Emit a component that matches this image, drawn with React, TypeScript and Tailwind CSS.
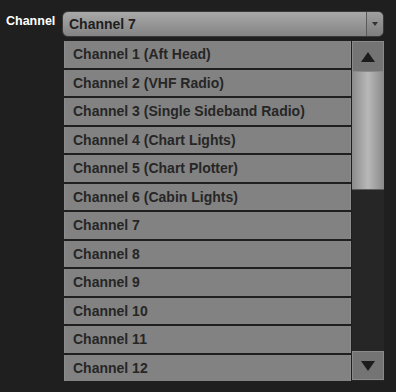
import { useState } from "react";

const channels = [
    "Channel 1 (Aft Head)",
    "Channel 2 (VHF Radio)",
    "Channel 3 (Single Sideband Radio)",
    "Channel 4 (Chart Lights)",
    "Channel 5 (Chart Plotter)",
    "Channel 6 (Cabin Lights)",
    "Channel 7",
    "Channel 8",
    "Channel 9",
    "Channel 10",
    "Channel 11",
    "Channel 12",
];

export default function App() {
    const [selected, setSelected] = useState<string>("Channel 7");

    return (
        <div className="w-[396px] h-[392px] bg-[#1f1f1f] flex pt-[11px] pl-[6px] font-['Liberation_Sans',Arial,sans-serif]">
            <label className="w-[56px] shrink-0 text-white font-bold text-[12.5px] leading-none pt-[4px]">Channel</label>
            <div className="flex flex-col w-[322px] gap-[4px]">
                {/* --- SELECT --- */}
                <div className="h-[26px] flex rounded-[6px] border border-[#3a3a3a] bg-gradient-to-b from-[#a8a8a8] to-[#848484] overflow-hidden">
                    <div className="flex-1 flex items-center pl-[6px] text-[#1e1e1e] font-bold text-[14px]">{selected}</div>
                    <div className="w-[17px] flex items-center justify-center border-l border-[#5a5a5a] bg-gradient-to-b from-[#a0a0a0] to-[#7e7e7e]">
                        <svg width="6" height="4" viewBox="0 0 6 4"><path d="M0 0H6L3 4Z" fill="#333" /></svg>
                    </div>
                </div>
                {/* --- LIST --- */}
                <div className="flex gap-[1px]">
                    <div className="flex flex-col gap-[2px] w-[287px] ml-[2px]">
                        {channels.map((c) => (
                            <button
                                key={c}
                                onClick={() => setSelected(c)}
                                className="h-[26.5px] bg-[#828282] border-x border-[#8c8c8c] text-left pl-[8px] text-[#262626] font-bold text-[14px] leading-none"
                            >
                                {c}
                            </button>
                        ))}
                    </div>
                    <div className="w-[32px] flex flex-col bg-[#262626]">
                        <div className="h-[31px] bg-[#747474] border border-[#8a8a8a] flex items-center justify-center">
                            <svg width="14" height="10" viewBox="0 0 14 10"><path d="M0 10H14L7 0Z" fill="#1c1c1c" /></svg>
                        </div>
                        <div className="h-[118px] bg-gradient-to-r from-[#8c8c8c] via-[#b8b8b8] to-[#8a8a8a] border-b border-[#5a5a5a]" />
                        <div className="flex-1" />
                        <div className="h-[29px] mb-[1px] bg-[#747474] border border-[#8a8a8a] flex items-center justify-center">
                            <svg width="14" height="10" viewBox="0 0 14 10"><path d="M0 0H14L7 10Z" fill="#1c1c1c" /></svg>
                        </div>
                    </div>
                </div>
            </div>
        </div>
    );
}
